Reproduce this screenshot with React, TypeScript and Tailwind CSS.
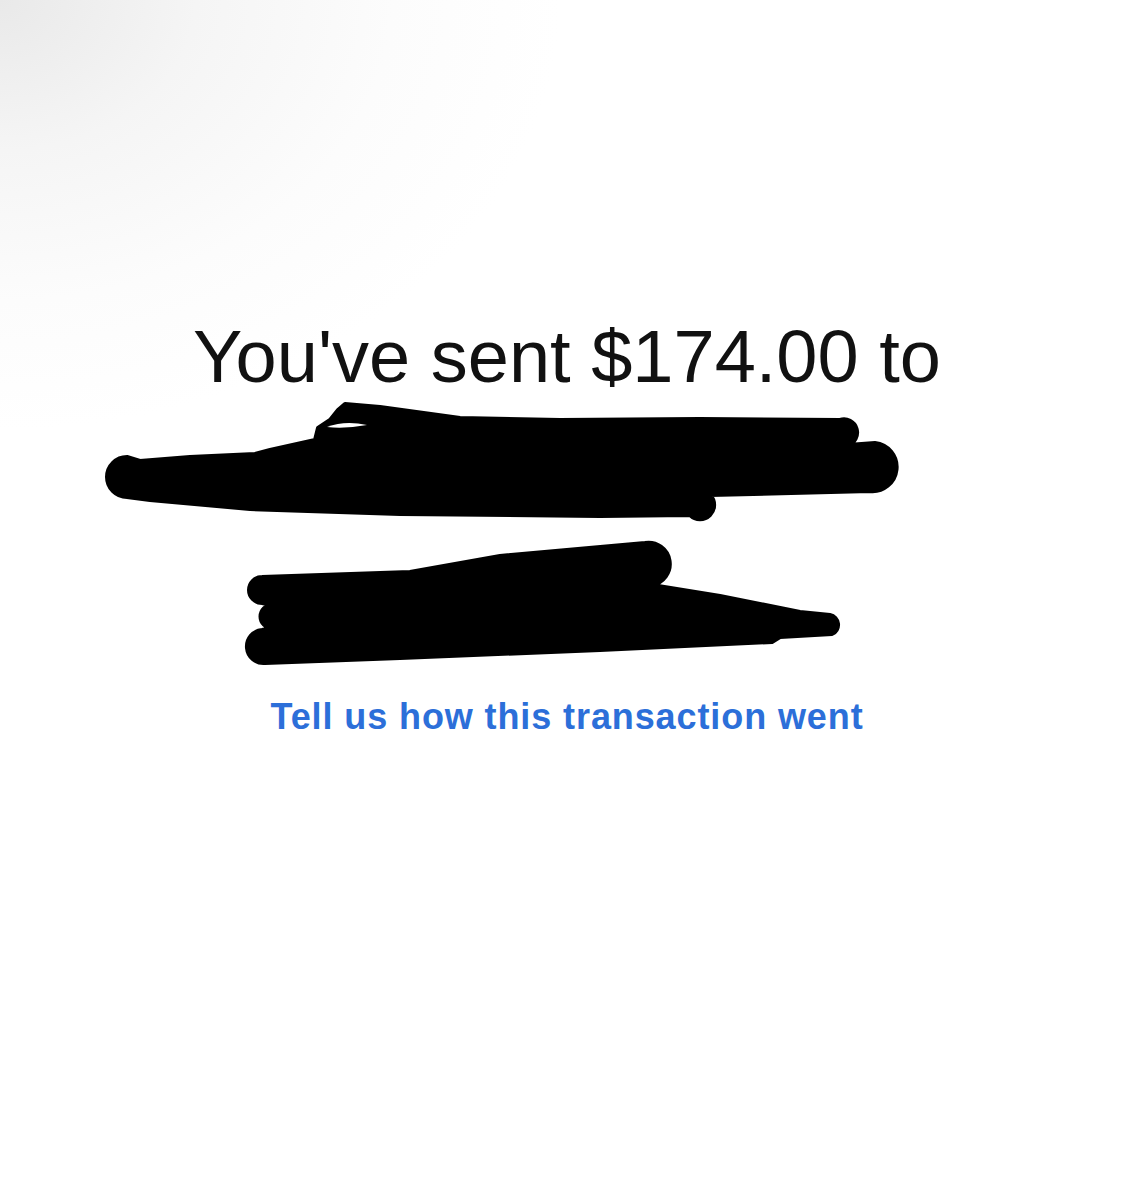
import React from 'react';

// hand-drawn redaction marks over the recipient's name
function ScribbleTop() {
  return (
    <svg width="795" height="120" viewBox="0 0 795 120" className="block overflow-visible ml-[105px]">
      <path
        d="M22 97 A20 20 0 0 1 22 57 L35 61 L85 57 L150 54 L165 50 L210 40 L213 28 L225 20 L233 10 L240 4 L275 7 L355 18 L455 20 L595 19 L735 20 A12 12 0 0 1 743 45 L770 43 A24 24 0 0 1 765 91 L605 95 A10 10 0 0 1 585 115 L495 116 L295 114 L145 109 L45 100 Z"
        fill="#000"
        stroke="#000"
        strokeWidth="4"
        strokeLinejoin="round"
      />
      <path d="M222 27 Q240 20 262 25 Q240 29 222 27 Z" fill="#fff" />
    </svg>
  );
}

function ScribbleBottom() {
  return (
    <svg width="600" height="125" viewBox="0 0 600 125" className="block overflow-visible mt-[20px] ml-[245px]">
      <path
        d="M17 37 L165 32 L255 16 L400 3 A21 21 0 0 1 407 45 L475 56 L555 72 L585 75 A10 10 0 0 1 587 94 L535 97 L527 102 L355 110 L155 118 L20 123 A16 16 0 0 1 17 90 L27 88 A11 11 0 0 1 27 65 L17 63 A13 13 0 0 1 17 37 Z"
        fill="#000"
        stroke="#000"
        strokeWidth="4"
        strokeLinejoin="round"
      />
    </svg>
  );
}

export default function App() {
  return (
    <div className="min-h-[1200px] w-full bg-white bg-[radial-gradient(ellipse_560px_430px_at_0_0,#e9e9e9_0%,#f5f5f5_35%,#fcfcfc_70%,#ffffff_100%)] font-['Liberation_Sans',Arial,sans-serif]">
      <div className="flex flex-col pt-[320px]">
        <h1 className="text-center text-[74px] leading-none font-normal text-[#111111]">
          You've sent $174.00 to
        </h1>
        <div className="mt-[6px]">
          <ScribbleTop />
        </div>
        <ScribbleBottom />
        <a
          href="#"
          className="mt-[34px] text-center text-[36px] leading-none font-bold tracking-[0.9px] text-[#2c6fd9]"
        >
          Tell us how this transaction went
        </a>
      </div>
    </div>
  );
}
